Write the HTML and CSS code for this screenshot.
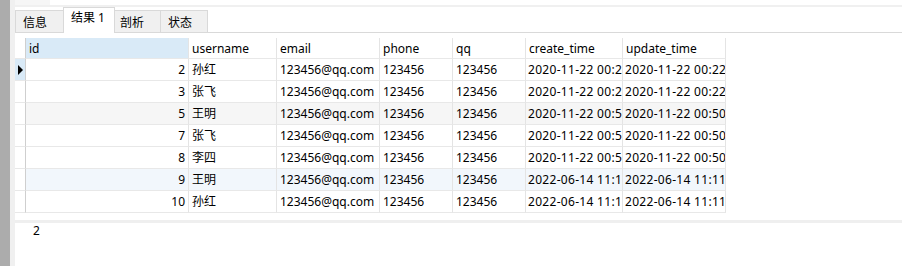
FILE: index.html
```html
<!DOCTYPE html>
<html>
<head>
<meta charset="utf-8">
<link rel="stylesheet" href="styles.css">
</head>
<body>
<div class="app">
  <div class="side-dark"></div>
  <div class="side-light"></div>
  <div class="main">
    <div class="top-strip"><div class="top-block"></div></div>
    <div class="top-band"></div>
    <div class="tabbar">
      <div class="tab t1">信息</div>
      <div class="tab t2 active">结果 1</div>
      <div class="tab t3">剖析</div>
      <div class="tab t4">状态</div>
    </div>
    <div class="grid-area">
      <div class="grid">
        <div class="row head">
          <div class="c ind"></div>
          <div class="c sel">id</div>
          <div class="c">username</div>
          <div class="c">email</div>
          <div class="c">phone</div>
          <div class="c">qq</div>
          <div class="c">create_time</div>
          <div class="c">update_time</div>
        </div>
        <div class="row">
          <div class="c ind cur"><span class="tri"></span></div>
          <div class="c num">2</div><div class="c">孙红</div><div class="c">123456@qq.com</div><div class="c">123456</div><div class="c">123456</div><div class="c dt">2020-11-22 00:22:00</div><div class="c dt">2020-11-22 00:22:00</div>
        </div>
        <div class="row">
          <div class="c ind"></div>
          <div class="c num">3</div><div class="c">张飞</div><div class="c">123456@qq.com</div><div class="c">123456</div><div class="c">123456</div><div class="c dt">2020-11-22 00:22:00</div><div class="c dt">2020-11-22 00:22:00</div>
        </div>
        <div class="row gray">
          <div class="c ind"></div>
          <div class="c num">5</div><div class="c">王明</div><div class="c">123456@qq.com</div><div class="c">123456</div><div class="c">123456</div><div class="c dt">2020-11-22 00:50:00</div><div class="c dt">2020-11-22 00:50:00</div>
        </div>
        <div class="row">
          <div class="c ind"></div>
          <div class="c num">7</div><div class="c">张飞</div><div class="c">123456@qq.com</div><div class="c">123456</div><div class="c">123456</div><div class="c dt">2020-11-22 00:50:00</div><div class="c dt">2020-11-22 00:50:00</div>
        </div>
        <div class="row">
          <div class="c ind"></div>
          <div class="c num">8</div><div class="c">李四</div><div class="c">123456@qq.com</div><div class="c">123456</div><div class="c">123456</div><div class="c dt">2020-11-22 00:50:00</div><div class="c dt">2020-11-22 00:50:00</div>
        </div>
        <div class="row blue">
          <div class="c ind"></div>
          <div class="c num">9</div><div class="c">王明</div><div class="c">123456@qq.com</div><div class="c">123456</div><div class="c">123456</div><div class="c dt">2022-06-14 11:11:00</div><div class="c dt">2022-06-14 11:11:00</div>
        </div>
        <div class="row">
          <div class="c ind"></div>
          <div class="c num">10</div><div class="c">孙红</div><div class="c">123456@qq.com</div><div class="c">123456</div><div class="c">123456</div><div class="c dt">2022-06-14 11:11:00</div><div class="c dt">2022-06-14 11:11:00</div>
        </div>
      </div>
    </div>
    <div class="bottom-band"></div>
    <div class="status">2</div>
  </div>
</div>
</body>
</html>
```

FILE: styles.css
```css
html, body {
  margin: 0;
  padding: 0;
  background: #ffffff;
}
body {
  width: 902px;
  height: 266px;
  overflow: hidden;
  font-family: "Noto Sans", "Noto Sans CJK SC", sans-serif;
  font-size: 12px;
  color: #000000;
}
.app {
  display: flex;
  height: 266px;
}
.side-dark {
  width: 10px;
  background: #acacac;
  flex: none;
}
.side-light {
  width: 5px;
  background: #f0f0f0;
  flex: none;
}
.main {
  flex: 1;
  display: flex;
  flex-direction: column;
  background: #ffffff;
}
.top-strip {
  height: 5px;
  display: flex;
}
.top-block {
  width: 35px;
  background: #f6f6f6;
}
.top-band {
  height: 2px;
  background: #f0f0f0;
}
.tabbar {
  height: 26px;
  display: flex;
  align-items: flex-end;
  border-bottom: 1px solid #d9d9d9;
  box-sizing: border-box;
}
.tab {
  height: 22px;
  line-height: 23px;
  box-sizing: border-box;
  background: #f0f0f0;
  border: 1px solid #d9d9d9;
  border-bottom: none;
  padding-left: 7px;
  margin-left: -1px;
  white-space: nowrap;
  position: relative;
}
.t1 { width: 49px; margin-left: 0; }
.t2 { width: 52px; }
.t3 { width: 47px; padding-left: 5px; }
.t4 { width: 48px; }
.tab.active {
  background: #ffffff;
  height: 26px;
  line-height: 20px;
  margin-bottom: -1px;
  z-index: 1;
}
.grid-area {
  padding-top: 5px;
  height: 187px;
  box-sizing: border-box;
}
.grid {
  width: 711px;
}
.row {
  display: grid;
  grid-template-columns: 11px 163px 88px 103px 73px 73px 97px 103px;
  height: 22px;
}
.row.head {
  height: 21px;
}
.c {
  box-sizing: border-box;
  border-right: 1px solid #e4e4e4;
  border-bottom: 1px solid #e8e8e8;
  padding: 0 3px;
  line-height: 21px;
  white-space: nowrap;
  overflow: hidden;
}
.head .c {
  line-height: 21px;
}
.c.dt {
  padding-left: 2px;
  letter-spacing: 0.3px;
}
.c.ind {
  border-right-color: #cfcfcf;
  padding: 0;
  position: relative;
}
.c.sel {
  background: #d9eaf7;
}
.c.num {
  text-align: right;
}
.c.cur {
  background: #d9eaf7;
}
.tri {
  position: absolute;
  left: 3px;
  top: 6px;
  width: 0;
  height: 0;
  border-top: 5px solid transparent;
  border-bottom: 5px solid transparent;
  border-left: 5px solid #000000;
}
.row.gray .c:not(.ind) {
  background: #f6f6f6;
}
.row.blue .c:not(.ind) {
  background: #f2f7fc;
}
.bottom-band {
  height: 3px;
  background: #efefef;
}
.status {
  padding-left: 18px;
  line-height: 16px;
  padding-top: 0;
}
```
